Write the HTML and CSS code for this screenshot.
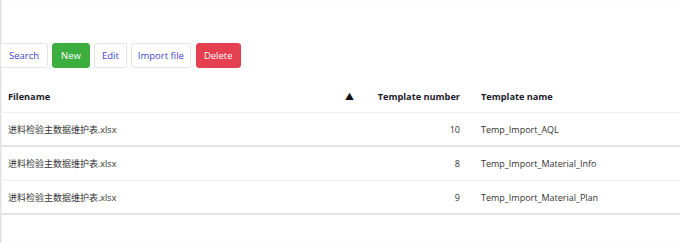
FILE: index.html
```html
<!DOCTYPE html>
<html lang="zh-CN">
<head>
    <meta charset="UTF-8">
    <title>Templates</title>
    <link rel="stylesheet" href="styles.css">
</head>
<body>
    <div class="page">
        <div class="toolbar">
            <button class="btn btn-light wide">Search</button>
            <button class="btn btn-green">New</button>
            <button class="btn btn-light wide">Edit</button>
            <button class="btn btn-light">Import file</button>
            <button class="btn btn-red">Delete</button>
        </div>

        <table class="grid">
            <thead>
                <tr>
                    <th class="col-file">Filename <span class="sort">&#9650;</span></th>
                    <th class="col-num">Template number</th>
                    <th class="col-name">Template name</th>
                </tr>
            </thead>
            <tbody>
                <tr>
                    <td>进料检验主数据维护表.xlsx</td>
                    <td class="col-num">10</td>
                    <td>Temp_Import_AQL</td>
                </tr>
                <tr class="alt">
                    <td>进料检验主数据维护表.xlsx</td>
                    <td class="col-num">8</td>
                    <td>Temp_Import_Material_Info</td>
                </tr>
                <tr>
                    <td>进料检验主数据维护表.xlsx</td>
                    <td class="col-num">9</td>
                    <td>Temp_Import_Material_Plan</td>
                </tr>
            </tbody>
        </table>
    </div>
</body>
</html>
```

FILE: styles.css
```css
html, body {
    margin: 0;
    height: 100%;
}
body {
    font-family: 'Open Sans', 'Noto Sans CJK SC', sans-serif;
    background: #fff;
    color: #222;
    box-shadow: inset 2px 0 2px -1px #d4d4d4;
}
.page {
    padding-top: 43px;
}
.toolbar {
    display: flex;
    gap: 4px;
    margin-bottom: 12px;
}
.btn {
    font-family: 'Open Sans', sans-serif;
    font-size: 9.5px;
    height: 25px;
    padding: 0 6px;
    border-radius: 3px;
    border: 1px solid #e2e4e8;
    background: #fff;
    color: #3f3fd0;
    cursor: pointer;
}
.btn.wide {
    padding: 0 7px;
}
.btn:first-child {
    padding: 0 8px;
}
.btn-green {
    background: #3bae3f;
    border-color: #3bae3f;
    color: #fff;
    padding: 0 8px;
}
.btn-red {
    background: #e4404f;
    border-color: #e4404f;
    color: #fff;
    padding: 0 7px;
    margin-left: 1px;
}
.grid {
    width: 100%;
    border-collapse: collapse;
    font-size: 9px;
}
.grid th {
    font-size: 9.2px;
    font-weight: 700;
    color: #1a1a2a;
    text-align: left;
    white-space: nowrap;
    height: 32px;
    padding: 0 8px;
    border-bottom: 1px solid #eeeeee;
}
.grid td {
    height: 32px;
    padding: 0 8px;
    color: #333;
    border-bottom: 2px solid #e2e2e2;
}
.grid tr.alt td {
    border-bottom: 1px solid #eeeeee;
    height: 33px;
}
.col-file {
    width: 346px;
    padding-right: 14px !important;
}
.sort {
    float: right;
    font-size: 9px;
    color: #111;
}
.grid .col-num {
    width: 84px;
    text-align: right;
}
.col-name {
    padding-left: 13px !important;
}
.grid td:last-child {
    padding-left: 13px;
}
```
